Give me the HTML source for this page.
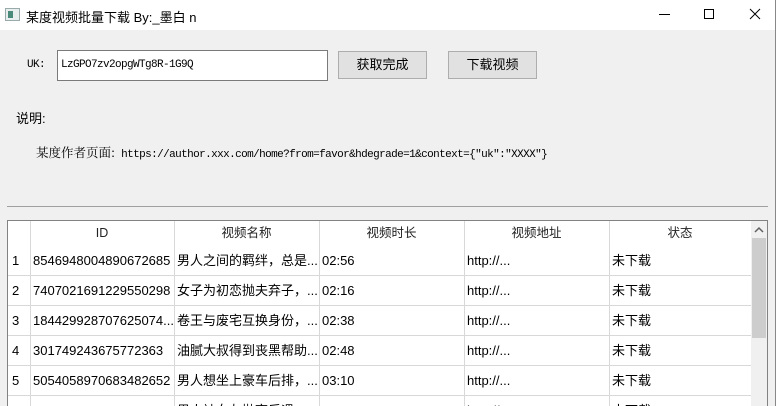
<!DOCTYPE html>
<html><head><meta charset="utf-8"><style>
*{margin:0;padding:0;box-sizing:border-box}
html{width:776px;height:406px;overflow:hidden}
body{width:776px;height:406px;overflow:hidden;background:#f0f0f0;position:relative;font-family:"Liberation Sans","Microsoft YaHei","Noto Sans CJK SC",sans-serif;color:#000}
.a{position:absolute}
.title{left:0;top:0;width:776px;height:30px;background:#fff}
.mono{font-family:"Liberation Mono","Noto Serif CJK SC",monospace;font-size:11px;letter-spacing:-0.6px}
.mono .c{font-family:"Noto Serif CJK SC",serif;font-size:12.5px;letter-spacing:0}
.btn{background:#e1e1e1;border:1px solid #adadad;font-size:13px;text-align:center;line-height:26px;font-family:"Liberation Sans","Noto Sans CJK SC",sans-serif}
.cell{position:absolute;font-size:13px;line-height:30px;white-space:nowrap;overflow:hidden;padding-left:3px;font-family:"Liberation Sans","Noto Sans CJK SC",sans-serif}
.hl{position:absolute;height:1px;background:#d8d8d8}
.vl{position:absolute;width:1px;background:#d8d8d8}
.hd{position:absolute;top:221px;height:25px;line-height:25px;font-size:12.5px;text-align:center;color:#222;font-family:"Liberation Sans","Noto Sans CJK SC",sans-serif}
</style></head><body>
<div class="a title"></div>
<div class="a" style="left:5px;top:8px;width:15px;height:13px;border:1px solid #9aa;background:#e8eeee"><div style="margin:2px;width:5px;height:7px;background:#4a8a7a"></div></div>
<div class="a" style="left:26px;top:7px;font-size:13px;font-family:'Liberation Sans','Noto Sans CJK SC',sans-serif">某度视频批量下载 By:_墨白 n</div>
<div class="a" style="left:659px;top:14px;width:11px;height:1px;background:#000"></div>
<div class="a" style="left:704px;top:9px;width:10px;height:10px;border:1px solid #000"></div>
<svg class="a" style="left:749px;top:8px" width="12" height="12"><path d="M1 1L11 11M11 1L1 11" stroke="#000" stroke-width="1"/></svg>
<div class="a" style="left:775px;top:0;width:1px;height:406px;background:#888"></div>

<div class="a mono" style="left:27px;top:59px">UK:</div>
<div class="a mono" style="left:57px;top:50px;width:271px;height:31px;background:#fff;border:1px solid #7a7a7a;padding-left:3px;line-height:29px">LzGPO7zv2opgWTg8R-1G9Q</div>
<div class="a btn" style="left:338px;top:51px;width:89px;height:28px">获取完成</div>
<div class="a btn" style="left:448px;top:51px;width:89px;height:28px">下载视频</div>
<div class="a" style="left:16px;top:108px;font-size:13px;font-family:'Liberation Sans','Noto Sans CJK SC',sans-serif">说明:</div>
<div class="a mono" style="left:36px;top:143px;white-space:nowrap"><span class="c">某度作者页面:</span> https://author.xxx.com/home?from=favor&amp;hdegrade=1&amp;context={"uk":"XXXX"}</div>

<div class="a" style="left:7px;top:206px;width:761px;height:1px;background:#a0a0a0"></div>
<div class="a" style="left:7px;top:220px;width:761px;height:200px;border:1px solid #828282;background:#fff"></div>
<div class="hd" style="left:30px;width:144px">ID</div>
<div class="hd" style="left:174px;width:145px">视频名称</div>
<div class="hd" style="left:319px;width:145px">视频时长</div>
<div class="hd" style="left:464px;width:145px">视频地址</div>
<div class="hd" style="left:609px;width:142px">状态</div>
<div class="vl" style="left:30px;top:221px;height:190px"></div>
<div class="vl" style="left:174px;top:221px;height:190px"></div>
<div class="vl" style="left:319px;top:221px;height:190px"></div>
<div class="vl" style="left:464px;top:221px;height:190px"></div>
<div class="vl" style="left:609px;top:221px;height:190px"></div>
<div class="hl" style="left:8px;top:275px;width:743px"></div>
<div class="hl" style="left:8px;top:305px;width:743px"></div>
<div class="hl" style="left:8px;top:335px;width:743px"></div>
<div class="hl" style="left:8px;top:365px;width:743px"></div>
<div class="hl" style="left:8px;top:395px;width:743px"></div>

<div class="cell" style="left:9px;top:246px">1</div><div class="cell" style="left:30px;top:246px;width:144px">8546948004890672685</div><div class="cell" style="left:174px;top:246px;width:145px">男人之间的羁绊，总是...</div><div class="cell" style="left:319px;top:246px">02:56</div><div class="cell" style="left:464px;top:246px">http://...</div><div class="cell" style="left:609px;top:246px">未下载</div>
<div class="cell" style="left:9px;top:276px">2</div><div class="cell" style="left:30px;top:276px;width:144px">7407021691229550298</div><div class="cell" style="left:174px;top:276px;width:145px">女子为初恋抛夫弃子，...</div><div class="cell" style="left:319px;top:276px">02:16</div><div class="cell" style="left:464px;top:276px">http://...</div><div class="cell" style="left:609px;top:276px">未下载</div>
<div class="cell" style="left:9px;top:306px">3</div><div class="cell" style="left:30px;top:306px;width:144px">184429928707625074...</div><div class="cell" style="left:174px;top:306px;width:145px">卷王与废宅互换身份，...</div><div class="cell" style="left:319px;top:306px">02:38</div><div class="cell" style="left:464px;top:306px">http://...</div><div class="cell" style="left:609px;top:306px">未下载</div>
<div class="cell" style="left:9px;top:336px">4</div><div class="cell" style="left:30px;top:336px;width:144px">301749243675772363</div><div class="cell" style="left:174px;top:336px;width:145px">油腻大叔得到丧黑帮助...</div><div class="cell" style="left:319px;top:336px">02:48</div><div class="cell" style="left:464px;top:336px">http://...</div><div class="cell" style="left:609px;top:336px">未下载</div>
<div class="cell" style="left:9px;top:366px">5</div><div class="cell" style="left:30px;top:366px;width:144px">5054058970683482652</div><div class="cell" style="left:174px;top:366px;width:145px">男人想坐上豪车后排，...</div><div class="cell" style="left:319px;top:366px">03:10</div><div class="cell" style="left:464px;top:366px">http://...</div><div class="cell" style="left:609px;top:366px">未下载</div>
<div class="cell" style="left:174px;top:396px;width:145px">男人被女友拋弃后遇...</div><div class="cell" style="left:464px;top:396px">http://...</div><div class="cell" style="left:609px;top:396px">未下载</div>

<div class="a" style="left:751px;top:221px;width:16px;height:185px;background:#f0f0f0"></div>
<svg class="a" style="left:754px;top:226px" width="10" height="8"><path d="M1 6L5 2L9 6" stroke="#606060" stroke-width="1.5" fill="none"/></svg>
<div class="a" style="left:752px;top:238px;width:14px;height:100px;background:#cdcdcd"></div>
</body></html>
